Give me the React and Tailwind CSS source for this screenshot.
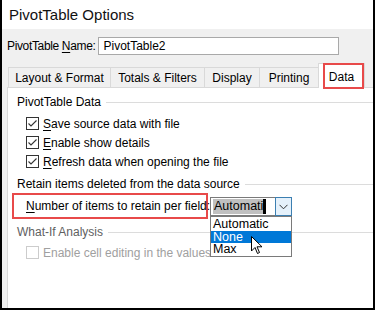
import React from 'react'

const font = { fontFamily: '"Liberation Sans", Arial, sans-serif' }

function Check({ checked = true, disabled = false }) {
  return (
    <span className={`w-[13px] h-[13px] border flex items-center justify-center bg-white shrink-0 ${disabled ? 'border-[#cccccc]' : 'border-[#333333]'}`}>
      {checked && (
        <svg width="11" height="11" viewBox="0 0 11 11">
          <path d="M1.5 5.5 L4 8 L9.5 2.5" fill="none" stroke="#333" strokeWidth="1.1" />
        </svg>
      )}
    </span>
  )
}

function Row({ u, rest, disabled }) {
  return (
    <div className="flex items-center gap-[4px] h-[19px] pl-[18px] whitespace-nowrap">
      <Check checked={!disabled} disabled={disabled} />
      <span className={disabled ? 'text-[#a0a0a0]' : 'text-black'}>
        <span className="underline underline-offset-2">{u}</span>{rest}
      </span>
    </div>
  )
}

function Group({ title, gray }) {
  return (
    <div className="flex items-center pl-[9px] h-[18px] whitespace-nowrap">
      <span className={gray ? 'text-[#5f5f5f]' : 'text-black'}>{title}</span>
      <span className="flex-1 h-px bg-[#dcdcdc] ml-[5px]" />
    </div>
  )
}

function Tab({ label, w, active }) {
  return active ? (
    <div className={`${w} h-[25px] bg-white border border-b-0 border-[#d9d9d9] flex items-center justify-center -mb-px relative z-10`}>
      <span className="pt-[2px]">{label}</span>
      <span className="absolute left-[4px] top-[-1px] w-[41px] h-[26px] border-2 border-[#e84a4a]" />
    </div>
  ) : (
    <div className={`${w} h-[20px] bg-[#f0f0f0] border border-b-0 border-r-0 border-[#d9d9d9] flex items-center justify-center whitespace-nowrap`}>
      {label}
    </div>
  )
}

function Cursor() {
  return (
    <svg className="absolute left-[40px] top-[19px]" width="12" height="19" viewBox="0 0 12 19">
      <path d="M0.5 0.5 L0.5 15 L4 11.5 L6.5 17.5 L8.5 16.5 L6 10.8 L11 10.8 Z" fill="#fff" stroke="#000" strokeWidth="1" strokeLinejoin="round" />
    </svg>
  )
}

export default function App() {
  return (
    <div style={font} className="w-[375px] h-[310px] border-x-2 border-b-2 border-black bg-[#f0f0f0] flex flex-col text-[12px] leading-none text-black overflow-hidden">
      {/* Title */}
      <div className="h-[29px] bg-white flex items-center pl-[7px] shrink-0">
        <span className="text-[15px] text-[#111111] whitespace-nowrap">PivotTable Options</span>
      </div>

      {/* Name */}
      <div className="flex items-center mt-[8px] pl-[5px] h-[18px] shrink-0 whitespace-nowrap">
        <span className="tracking-[-0.35px]"><span>PivotTable </span><span className="underline underline-offset-2">N</span>ame:</span>
        <div className="ml-[3px] w-[241px] h-[18px] border border-[#a9a9a9] bg-white flex items-center pl-[4px]">PivotTable2</div>
      </div>

      {/* Tabs */}
      <div className="flex items-end pl-[6px] mt-[7px] h-[25px] shrink-0">
        <Tab label="Layout & Format" w="w-[102px]" />
        <Tab label="Totals & Filters" w="w-[94px]" />
        <Tab label="Display" w="w-[55px]" />
        <Tab label="Printing" w="w-[59px]" />
        <Tab label="Data" w="w-[47px]" active />
      </div>

      {/* Panel */}
      <div className="flex-1 bg-white border-l border-t border-[#d9d9d9] ml-[5px] flex flex-col pt-[5px]">
        <Group title="PivotTable Data" />
        <div className="mt-[3px] flex flex-col">
          <Row u="S" rest="ave source data with file" />
          <Row u="E" rest="nable show details" />
          <Row u="R" rest="efresh data when opening the file" />
        </div>
        <div className="mt-[4px]"><Group title="Retain items deleted from the data source" /></div>

        <div className="flex items-start ml-[4px]">
          <div className="w-[196px] h-[26px] border-2 border-[#e84a4a] flex items-center pl-[12px] whitespace-nowrap">
            <span><span className="underline underline-offset-2">N</span>umber of items to retain per field:</span>
          </div>
          <div className="relative ml-[2px] mt-[4px] w-[82px]">
            <div className="h-[19px] border border-[#7a7a7a] bg-white flex items-center text-[12.5px]">
              <div className="flex-1 flex items-center pl-[2px] h-full whitespace-nowrap overflow-hidden">
                <span className="bg-[#c0c0c0] leading-[15px] px-px">Automati</span>
                <span className="w-[3px] h-[15px] bg-black -ml-[1px]" />
              </div>
              <div className="w-[17px] h-[19px] -mr-px -my-px border border-[#3c7fb1] bg-[#e5f1fb] flex items-center justify-center shrink-0">
                <svg width="9" height="6" viewBox="0 0 9 6">
                  <path d="M0.5 0.8 L4.5 4.8 L8.5 0.8" fill="none" stroke="#333" strokeWidth="1" />
                </svg>
              </div>
            </div>
            <div className="absolute left-0 top-[19px] w-[82px] border border-[#7a7a7a] bg-white z-20 flex flex-col text-[12.5px] whitespace-nowrap">
              <div className="h-[14px] flex items-center pl-[2px]">Automatic</div>
              <div className="h-[12px] flex items-center pl-[2px] bg-[#0078d7] text-white">None</div>
              <div className="h-[13px] flex items-center pl-[2px]">Max</div>
              <Cursor />
            </div>
          </div>
        </div>

        <div className="mt-[4px]"><Group title="What-If Analysis" gray /></div>
        <div className="mt-[2px]">
          <Row u="" rest="Enable cell editing in the values area" disabled />
        </div>
      </div>
    </div>
  )
}
